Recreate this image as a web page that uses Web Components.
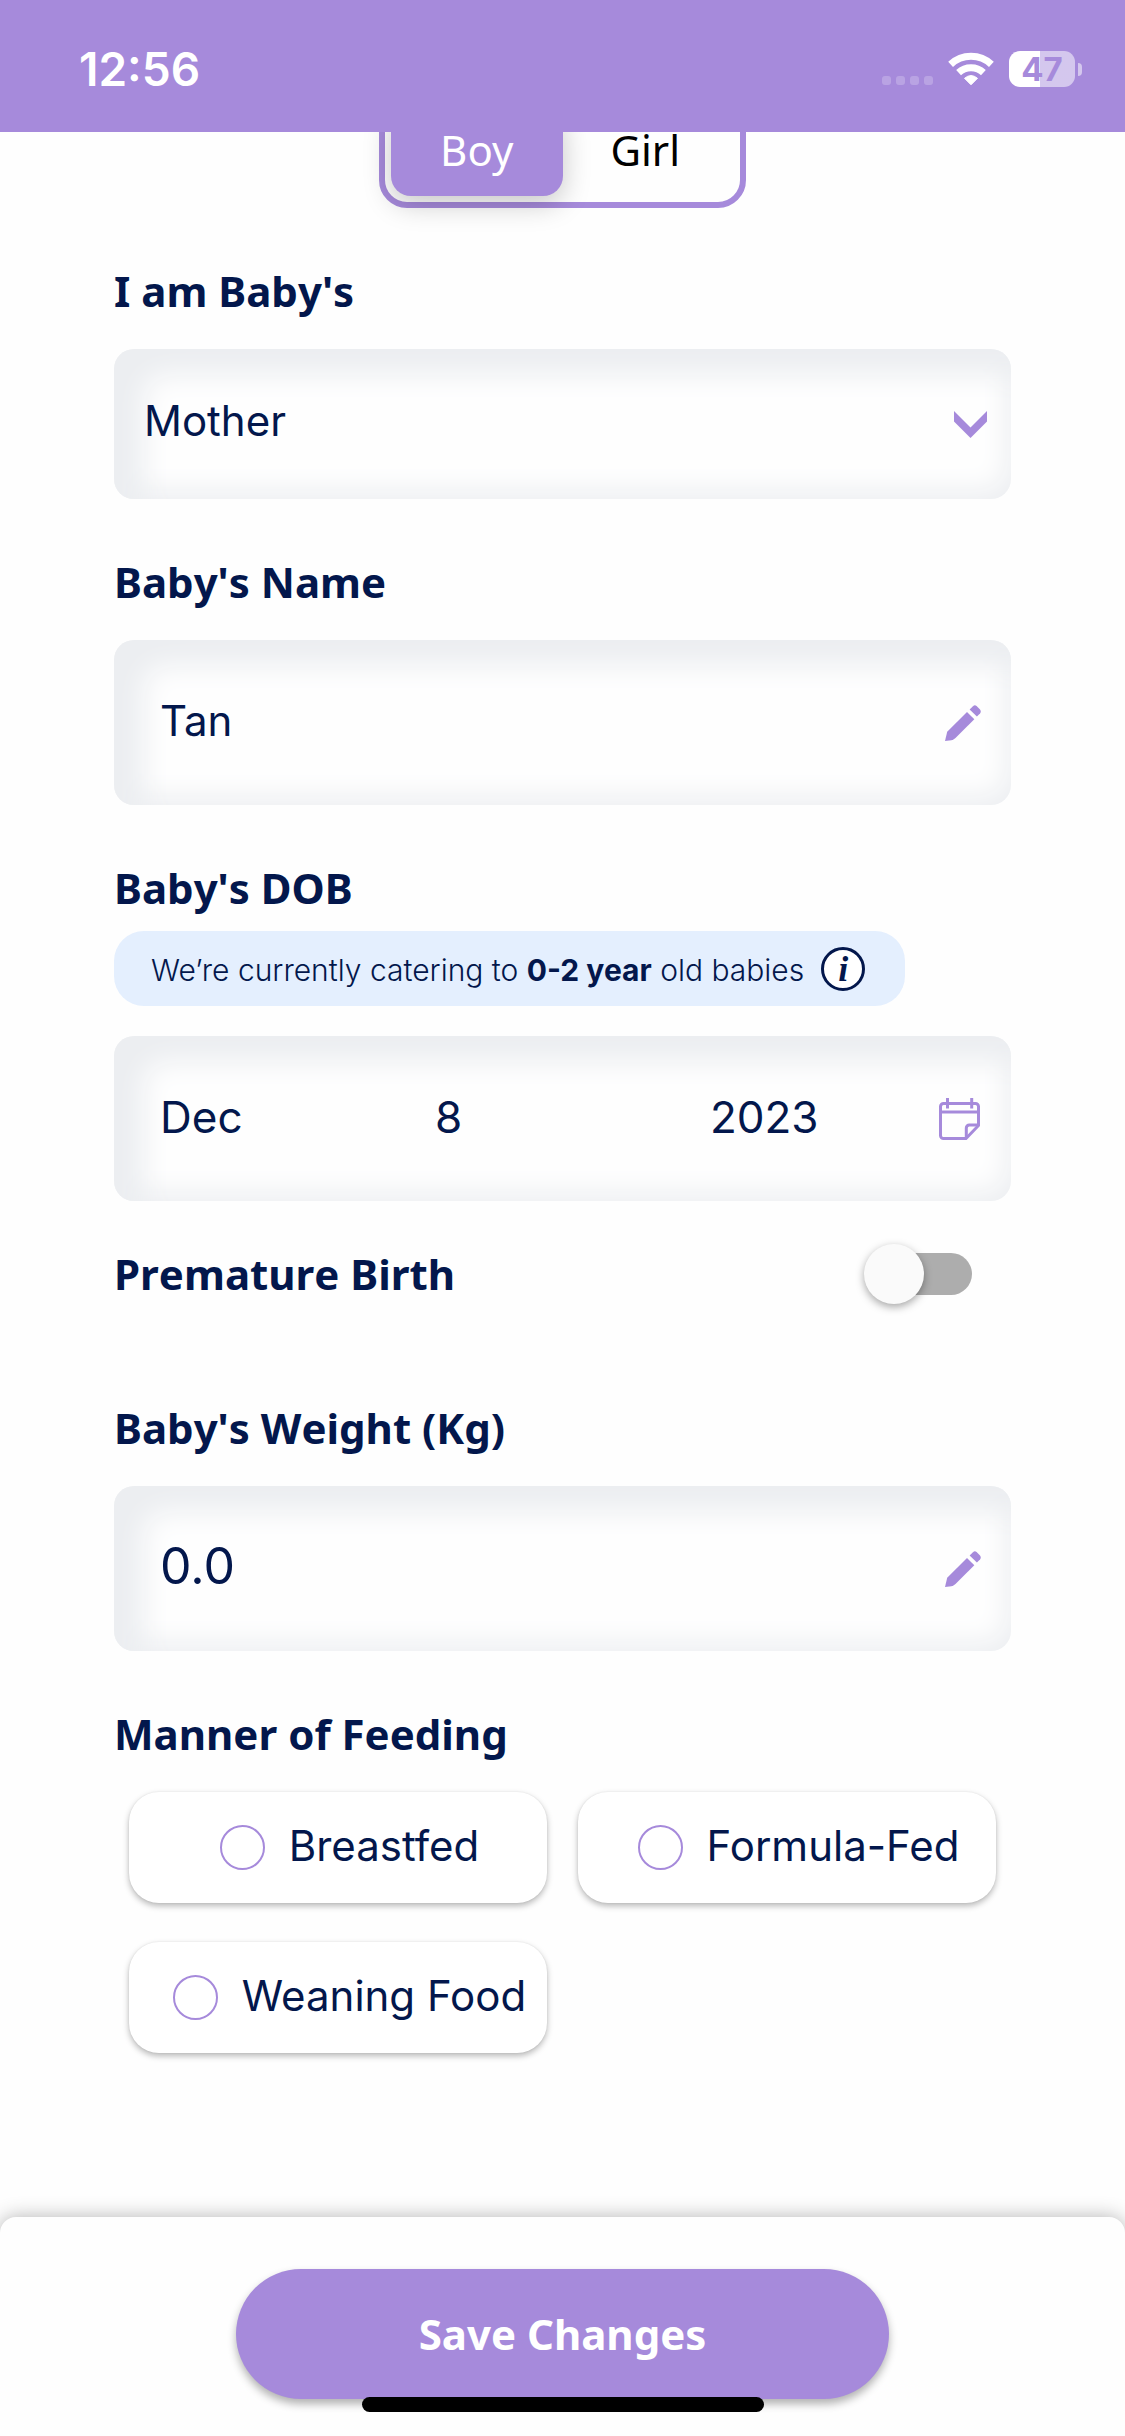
<!DOCTYPE html>
<html lang="en">
<head>
<meta charset="utf-8">
<meta name="viewport" content="width=device-width">
<title>Baby profile</title>
<style>
:root{--violet:#a68adb;--navy:#03174c;--ui:Inter,"Liberation Sans",sans-serif;--head:"Noto Sans","Liberation Sans",sans-serif}
*{box-sizing:border-box}
body{margin:0;background:#fefefe;color:var(--navy);font-family:var(--ui)}
</style>
</head>
<body>
<profile-page>
  <status-bar slot="top" time="12:56" charge="47"></status-bar>
  <segment-toggle options="Boy,Girl"></segment-toggle>
  <select-field label="I am Baby's" options="Mother,Father,Guardian"></select-field>
  <text-field label="Baby's Name" value="Tan"></text-field>
  <date-field label="Baby's DOB" month="Dec" day="8" year="2023">We’re currently catering to <b>0-2 year</b> old babies</date-field>
  <switch-row label="Premature Birth"></switch-row>
  <text-field class="weight" label="Baby's Weight (Kg)" value="0.0" large></text-field>
  <choice-group label="Manner of Feeding" options="Breastfed,Formula-Fed,Weaning Food"></choice-group>
  <save-bar slot="bottom">Save Changes</save-bar>
</profile-page>

<script>
const base = `
*{box-sizing:border-box}
:host{display:block}
button,input,select{font:inherit;color:inherit;margin:0;padding:0;border:0;background:none;min-width:0}
svg{display:block;flex:none}
.label{display:block;font:700 42px/60px var(--head);font-kerning:none;color:var(--navy);margin:0 0 28px;padding:0}
.box{display:flex;align-items:center;height:165px;border-radius:20px;background:#fefefe;font-size:42px;
  box-shadow:inset 30px 26px 28px #eceef1,inset -4px -8px 28px #eceef1}
.icon{display:flex;flex:none;cursor:pointer}
`;
function define(name, render) {
  customElements.define(name, class extends HTMLElement {
    connectedCallback() {
      if (this.shadowRoot) return;
      const a = n => this.getAttribute(n) || "";
      this.attachShadow({mode: "open"}).innerHTML = "<style>" + base + "</style>" + render(a, this);
    }
  });
}

define("profile-page", () => `
<style>
:host{display:flex;flex-direction:column;min-height:100vh}
header{position:sticky;top:0;z-index:2}
main{flex:1;display:flex;flex-direction:column;gap:53px;margin-top:-38px;padding:0 114px 48px}
footer{position:sticky;bottom:0;z-index:2}
::slotted(switch-row){margin-top:-10px}
::slotted(.weight){margin-top:41px}
</style>
<header><slot name="top"></slot></header><main><slot></slot></main><footer><slot name="bottom"></slot></footer>`);

define("status-bar", a => `
<style>
:host{display:flex;align-items:center;justify-content:space-between;height:132px;padding:6px 43px 0 79px;background:var(--violet);color:#fff}
time{font-size:46px;font-weight:600;line-height:48px}
.right{display:flex;align-items:center}
.dots{display:flex;gap:5px;margin:22px 15px 0 0}
.dots i{width:9px;height:9px;border-radius:3px;background:rgba(255,255,255,.22)}
.battery{width:66px;height:36px;margin:0 3px 0 15px;border-radius:11px;text-align:center;font-size:33px;font-weight:700;line-height:36px;color:var(--violet);
 background:linear-gradient(90deg,#fff 47%,rgba(255,255,255,.52) 47%)}
.cap{width:4px;height:13px;border-radius:0 4px 4px 0;background:rgba(255,255,255,.52)}
</style>
<time>${a("time")}</time>
<div class="right"><div class="dots"><i></i><i></i><i></i><i></i></div>
<svg width="46" height="34" viewBox="0 0 46 34" fill="none" stroke="#fff"><path stroke-width="7" d="M2.6 12.4A29.8 29.8 0 0 1 43.4 12.4"/><path stroke-width="7" d="M10.6 20.6A18 18 0 0 1 35.4 20.6"/><path fill="#fff" stroke-linejoin="round" d="M23 32.8L16.5 26.3Q23 20.8 29.5 26.3Z"/></svg>
<div class="battery">${a("charge")}</div><div class="cap"></div></div>`);

define("segment-toggle", a => `
<style>
:host{display:flex;justify-content:center}
div{display:flex;width:367px;height:114px;padding:6px;border:6px solid var(--violet);border-radius:28px;font:400 42px/60px var(--head);color:#000}
button{flex:1 1 50%;padding-bottom:2px;border-radius:20px}
button:last-child{padding-right:6px}
button[aria-pressed=true]{background:var(--violet);color:#fff;box-shadow:0 8px 28px rgba(0,0,0,.22)}
</style>
<div role="group" aria-label="Gender">${a("options").split(",").map((o, i) => `<button type="button" aria-pressed="${i === 0}">${o}</button>`).join("")}</div>`);

define("select-field", a => `
<style>
.box{height:150px}
select{flex:1;align-self:stretch;appearance:none;padding:0 0 8px 30px;outline:0}
svg{margin-right:24px}
</style>
<label class="label" for="s">${a("label")}</label>
<div class="box"><select id="s">${a("options").split(",").map(o => `<option>${o}</option>`).join("")}</select>
<svg width="33" height="27" viewBox="0 0 33 27" fill="#a68adb"><path d="M0 0L16.5 16.5L33 0V10.5L16.5 27L0 10.5Z"/></svg></div>`);

define("text-field", (a, el) => `
<style>
input{flex:1;align-self:stretch;padding:0 0 5px 46px;outline:0;${el.hasAttribute("large") ? "font-size:50px" : ""}}
button{margin-right:30px}
</style>
<label class="label" for="t">${a("label")}</label>
<div class="box"><input id="t" value="${a("value")}"><button class="icon" type="button" aria-label="Edit">
<svg width="36" height="36" viewBox="0 0 36 36" fill="#a68adb"><path d="M0 36L2.2 26.8L22 7L29.3 14.2L10.5 33Q9 34.3 6.5 35.2Z"/><path d="M24.6 4.6L28 1.2Q29.8-.4 31.6 1.1L34.8 4.3Q36.6 6.4 35 8.4L31.9 11.6Z"/></svg></button></div>`);

define("date-field", a => `
<style>
.label{margin-bottom:13px}
.note{display:flex;align-items:center;width:fit-content;height:75px;margin-bottom:30px;padding:0 40px 0 37px;gap:17px;border-radius:30px;background:#e4effe;font-size:30px;font-weight:300;line-height:36px}
::slotted(b){font-weight:700}
.info{width:44px;height:44px;flex:none;border:3px solid var(--navy);border-radius:50%;background:#fff;font:italic 700 36px/36px "Liberation Serif",serif;text-align:center}
.text{padding-top:2px}
.box{font-size:44px}
input{flex:6;align-self:stretch;width:0;padding-bottom:3px;outline:0}
input:first-child{margin-left:46px}
input:nth-child(3){flex:5}
.icon{margin-right:31px}
</style>
<label class="label" for="m">${a("label")}</label>
<div class="note"><span class="text"><slot></slot></span><button class="info" type="button">i</button></div>
<div class="box"><input id="m" value="${a("month")}"><input aria-label="Day" value="${a("day")}"><input aria-label="Year" value="${a("year")}">
<button class="icon" type="button" aria-label="Open calendar"><svg width="41" height="42" viewBox="0 0 41 42" fill="none" stroke="#a68adb" stroke-width="3"><path d="M39.5 27.5V8.5a3 3 0 0 0-3-3h-32a3 3 0 0 0-3 3v29a3 3 0 0 0 3 3H27Z"/><path d="M1.5 14H39.5M8.5 0V10.5M32.7 0V10.5M27.3 40V30a3 3 0 0 1 3-3H39.5"/></svg></button></div>`);

define("switch-row", a => `
<style>
:host{display:flex;align-items:center;justify-content:space-between;padding-right:39px}
.label{margin:0}
input{appearance:none;display:flex;align-items:center;width:108px;height:60px;cursor:pointer}
input::before{content:"";flex:none;width:60px;height:60px;border-radius:50%;background:#fafafa;box-shadow:0 3px 8px rgba(0,0,0,.35);z-index:1}
input::after{content:"";flex:none;width:90px;height:42px;margin-left:-42px;border-radius:21px;background:#adadad}
input:checked::before{transform:translateX(48px)}
input:checked::after{background:var(--violet)}
</style>
<label class="label" for="w">${a("label")}</label><input id="w" type="checkbox" role="switch">`);

define("choice-group", a => `
<style>
fieldset{margin:0;padding:0;border:0;min-width:0}
.grid{display:grid;grid-template-columns:1fr 1fr;gap:39px 31px;padding:0 15px}
.card{display:flex;align-items:center;justify-content:center;gap:24px;height:111px;padding-left:23px;border-radius:30px;background:#fff;font-size:42px;line-height:50px;white-space:nowrap;
 box-shadow:0 3px 6px rgba(0,0,0,.28),0 0 2px rgba(0,0,0,.08)}
span{padding-bottom:4px}
input{appearance:none;flex:none;width:45px;height:45px;border:2px solid var(--violet);border-radius:50%}
input:checked{background:radial-gradient(var(--violet) 45%,transparent 48%)}
</style>
<fieldset><legend class="label">${a("label")}</legend><div class="grid">${a("options").split(",").map(o => `<label class="card"><input type="radio" name="feeding"><span>${o}</span></label>`).join("")}</div></fieldset>`);

define("save-bar", () => `
<style>
:host{position:relative;display:flex;justify-content:center;padding:52px 0 37px;border-radius:16px 16px 0 0;background:#fefefe;box-shadow:0 0 20px rgba(0,0,0,.3)}
button{width:58%;height:130px;border-radius:65px;background:var(--violet);color:#fff;font:700 42px/60px var(--head);box-shadow:0 5px 9px rgba(0,0,0,.3)}
i{position:absolute;left:50%;bottom:24px;width:402px;height:15px;margin-left:-201px;border-radius:8px;background:#000}
</style>
<button type="button"><slot></slot></button><i></i>`);
</script>
</body>
</html>
